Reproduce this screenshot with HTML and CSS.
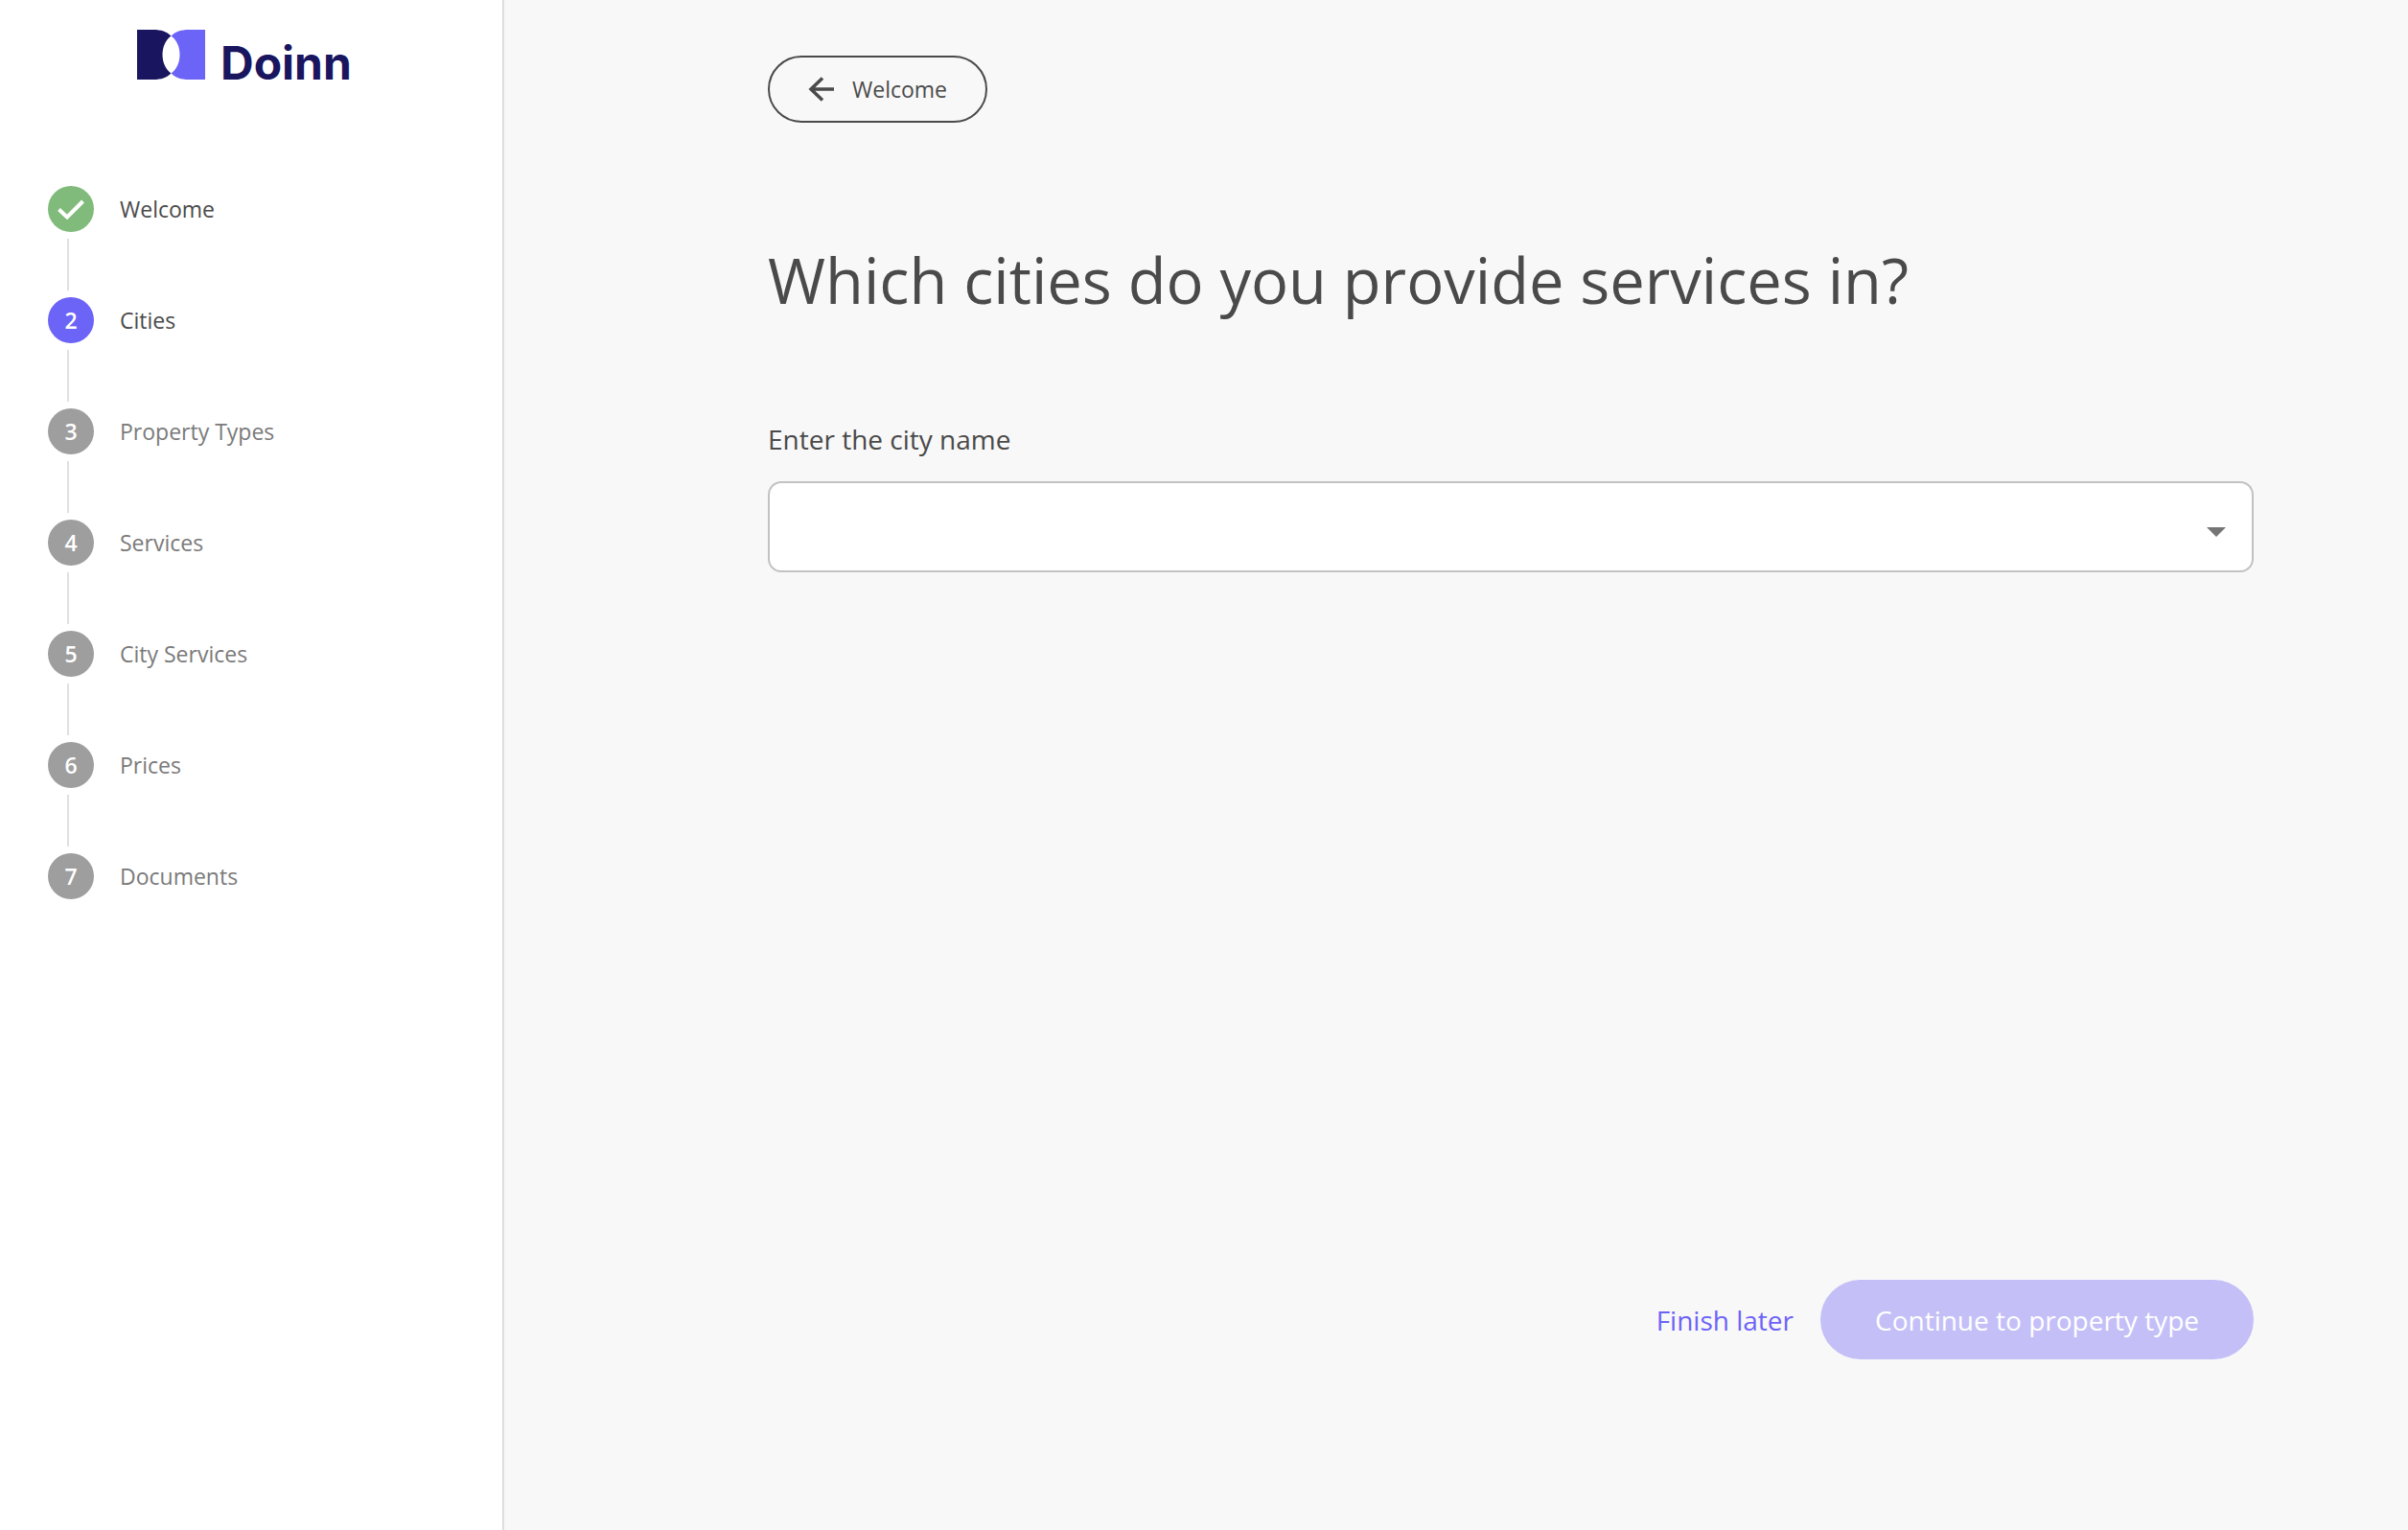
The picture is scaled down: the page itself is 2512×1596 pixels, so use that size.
FILE: index.html
```html
<!DOCTYPE html>
<html lang="en">
<head>
  <meta charset="utf-8">
  <meta name="viewport" content="width=device-width, initial-scale=1">
  <title>Doinn – Cities</title>
  <link rel="stylesheet" href="styles.css">
</head>
<body>
  <div class="app">
    <aside class="sidebar">
      <div class="logo">
        <svg class="logo-mark" viewBox="0 0 71 52" aria-hidden="true">
          <path fill="#19155f" d="M0 0H17C25 0 31 2 35.500 6.500C29.500 11 26.500 18 26.500 26C26.500 34 29.500 41 35.500 45.500C31 50 25 52 17 52H0Z"/>
          <path fill="#6c63f7" d="M71 0H54C46 0 40 2 35.500 6.500C41.500 11 44.500 18 44.500 26C44.500 34 41.500 41 35.500 45.500C40 50 46 52 54 52H71Z"/>
        </svg>
        <span class="logo-name">Doinn</span>
      </div>
      <ol class="steps">
        <li class="step step-done">
          <span class="step-badge">
            <svg class="check" viewBox="0 0 28 21" aria-hidden="true"><path d="M1.500 10.500L10 18.500L26.500 2" fill="none" stroke="#fff" stroke-width="4"/></svg>
          </span>
          <span class="step-label">Welcome</span>
        </li>
        <li class="step step-current" aria-current="step"><span class="step-badge">2</span><span class="step-label">Cities</span></li>
        <li class="step"><span class="step-badge">3</span><span class="step-label">Property Types</span></li>
        <li class="step"><span class="step-badge">4</span><span class="step-label">Services</span></li>
        <li class="step"><span class="step-badge">5</span><span class="step-label">City Services</span></li>
        <li class="step"><span class="step-badge">6</span><span class="step-label">Prices</span></li>
        <li class="step"><span class="step-badge">7</span><span class="step-label">Documents</span></li>
      </ol>
    </aside>
    <main class="main">
      <button class="back" type="button">
        <svg class="back-icon" viewBox="0 0 28 26" aria-hidden="true"><path d="M27 13H3M15 1.500L3 13L15 24.500" fill="none" stroke="currentColor" stroke-width="3.500"/></svg>
        <span>Welcome</span>
      </button>
      <h1 class="title">Which cities do you provide services in?</h1>
      <label class="field-label" for="city">Enter the city name</label>
      <div class="select-wrap">
        <select class="select" id="city" name="city"><option value=""></option></select>
        <svg class="caret" viewBox="0 0 20 10" aria-hidden="true"><path d="M0 0H20L10 10Z" fill="#757575"/></svg>
      </div>
      <div class="actions">
        <a class="later" href="#">Finish later</a>
        <button class="continue" type="button" disabled>Continue to property type</button>
      </div>
    </main>
  </div>
</body>
</html>
```
FILE: styles.css
```css
* {
  box-sizing: border-box;
}

body {
  margin: 0;
  font-family: "Open Sans", "Noto Sans", sans-serif;
  font-size: 23px;
  line-height: 32px;
  color: #4a4a4a;
  background: #f8f8f8;
}

button,
select {
  font: inherit;
}

.app {
  display: flex;
  min-height: 100vh;
}

/* Sidebar */
.sidebar {
  flex: 0 0 526px;
  padding: 31px 50px;
  background: #fff;
  border-right: 2px solid #dedede;
}

.logo {
  display: flex;
  align-items: flex-end;
  gap: 16px;
  padding-left: 93px;
}

.logo-mark {
  width: 71px;
  height: 52px;
}

.logo-name {
  font-family: Inter, sans-serif;
  font-size: 48px;
  font-weight: 700;
  line-height: 34px;
  color: #19155f;
}

.steps {
  margin: 111px 0 0;
  padding: 0;
  list-style: none;
}

.step {
  display: grid;
  grid-template-columns: 48px 1fr;
  column-gap: 27px;
  align-items: center;
  color: #7a7a7a;
}

.step:not(:last-child)::after {
  content: "";
  width: 2px;
  height: 54px;
  margin: 7px 0 7px 20px;
  background: #e0e0e0;
}

.step-badge {
  display: flex;
  align-items: center;
  justify-content: center;
  height: 48px;
  border-radius: 50%;
  font-weight: 600;
  color: #fff;
  background: #9e9e9e;
}

.step-done,
.step-current {
  color: #4a4a4a;
}

.step-done .step-badge {
  background: #81bb7b;
}

.step-current .step-badge {
  background: #6c63f7;
}

.check {
  width: 28px;
  height: 21px;
}

/* Main panel */
.main {
  flex: 1;
  display: flex;
  flex-direction: column;
  padding: 58px 161px 178px 275px;
}

.back {
  display: flex;
  align-items: center;
  align-self: flex-start;
  gap: 18px;
  height: 70px;
  padding: 0 40px;
  border: 2px solid #4a4a4a;
  border-radius: 35px;
  color: inherit;
  background: transparent;
}

.back-icon {
  width: 28px;
  height: 26px;
}

.title {
  margin: 118px 0 100px;
  font-size: 65px;
  font-weight: 400;
  line-height: 92px;
}

.field-label {
  margin-bottom: 24px;
  font-size: 28px;
  line-height: 40px;
}

.select-wrap {
  position: relative;
}

.select {
  display: block;
  width: 100%;
  height: 95px;
  padding: 0 64px 0 24px;
  border: 2px solid #c2c2c2;
  border-radius: 14px;
  font-size: 28px;
  color: inherit;
  background: #fff;
  appearance: none;
}

.caret {
  position: absolute;
  top: 48px;
  right: 29px;
  width: 20px;
  height: 10px;
  pointer-events: none;
}

.actions {
  display: flex;
  align-items: center;
  justify-content: flex-end;
  gap: 28px;
  margin-top: auto;
  font-size: 28px;
}

.later {
  color: #6c63f7;
  text-decoration: none;
}

.continue {
  height: 83px;
  padding: 0 57px;
  border: 0;
  border-radius: 42px;
  color: #fff;
  background: #c4c0f7;
}
```
